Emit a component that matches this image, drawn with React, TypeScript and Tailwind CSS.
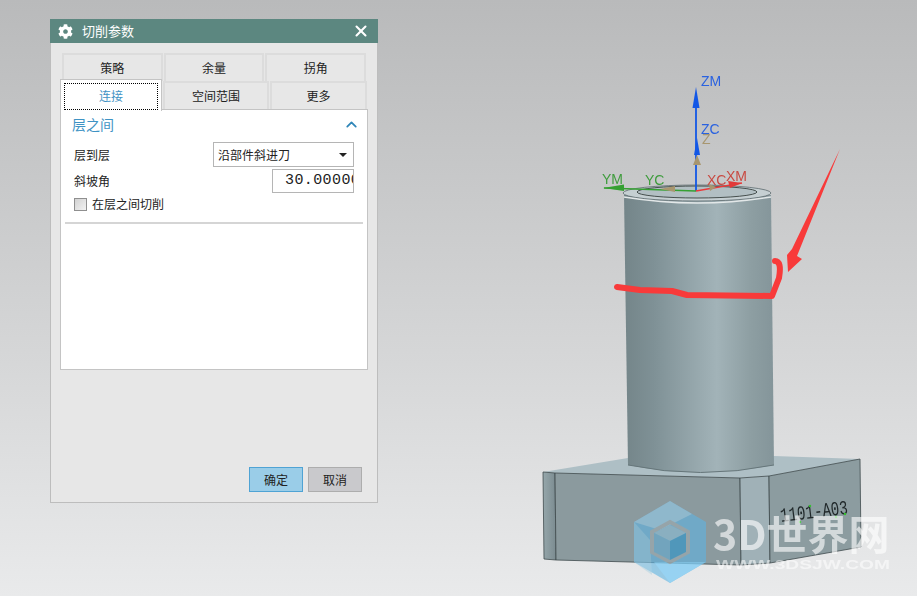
import { ChevronUp, X } from "lucide-react"
import { FaCog } from "react-icons/fa"

const cjk = "font-['Noto_Sans_CJK_SC','Liberation_Sans',sans-serif]"

function Scene() {
  return (
    <svg className="absolute left-0 top-0 blur-[0.4px]" width="917" height="596" viewBox="0 0 917 596">
      <defs>
        <linearGradient id="cyl" x1="0" x2="1" y1="0" y2="0">
          <stop offset="0" stopColor="#748589" />
          <stop offset="0.2" stopColor="#7f9196" />
          <stop offset="0.62" stopColor="#a2b3b8" />
          <stop offset="0.85" stopColor="#8d9ea2" />
          <stop offset="1" stopColor="#84959a" />
        </linearGradient>
        <linearGradient id="leftFace" x1="0" x2="1" y1="0" y2="0">
          <stop offset="0" stopColor="#96a7ab" />
          <stop offset="1" stopColor="#7b8b90" />
        </linearGradient>
      </defs>

      {/* block */}
      <g stroke="#3f4a4d" strokeWidth="0.8" strokeLinejoin="round">
        <polygon points="543,472 628,458 774,456 860,459 769,476 740,478 555,473" fill="#aebfc5" stroke="none" />
        <polygon points="543,472 555,473 556,560 544,559" fill="url(#leftFace)" />
        <polygon points="555,473 740,478 741,565 556,560" fill="#8b9a9e" />
        <polygon points="740,478 769,476 770,563 741,565" fill="#a0b1b7" />
        <polygon points="769,476 860,459 861,547 770,563" fill="#8c9ca0" />
      </g>
      <text x="781" y="522" fontSize="20" textLength="68" lengthAdjust="spacingAndGlyphs" fill="#20282a" transform="rotate(-7 781 522)" className="font-['Liberation_Mono',monospace]">1101-A03</text>
      <g fill="#35c02f">
        <circle cx="800" cy="522" r="1.2" />
        <circle cx="810" cy="506" r="1.2" />
        <circle cx="836" cy="517" r="1.2" />
        <circle cx="845" cy="514" r="1.2" />
      </g>

      {/* cylinder */}
      <path d="M624 195 L628 465 Q700 480 774 465 L771 195 Z" fill="url(#cyl)" />
      <path d="M628 465 Q700 480 774 465" fill="none" stroke="#66767a" strokeWidth="1" />
      <ellipse cx="697" cy="193" rx="74" ry="8" fill="#c5cfd2" stroke="#5d6a6d" strokeWidth="0.8" />
      <ellipse cx="697" cy="192" rx="60" ry="6" fill="#b2bfc3" stroke="#39423f" strokeWidth="0.9" />
      <path d="M624 197 Q697 209 771 197" fill="none" stroke="#e2e7e8" strokeWidth="1.4" />

      {/* axes */}
      <path d="M696 191 L696 105" stroke="#1257e6" strokeWidth="1.8" />
      <polygon points="696,87 692.5,108 699.5,108" fill="#1257e6" />
      <polygon points="697,138 694,155 700,155" fill="#1257e6" />
      <polygon points="697,155 693,165 701,165" fill="#a8966f" />
      <path d="M696 191 L604 188" stroke="#35a032" strokeWidth="1.6" />
      <polygon points="603,188 624,184.5 624,191" fill="#35a032" />
      <polygon points="660,189 675,186 675,192" fill="#a8966f" />
      <path d="M696 191 L742 183" stroke="#ea3a3a" strokeWidth="1.6" />
      <polygon points="742,183 728,181 730,188" fill="#e23a3a" />
      <polygon points="716,187 709,184 710,191" fill="#a8966f" />
      <g fontSize="14" className="font-['Liberation_Sans',sans-serif]">
        <text x="701" y="86" fill="#2a62e0">ZM</text>
        <text x="701" y="134" fill="#2a62e0">ZC</text>
        <text x="702" y="144" fill="#a8966f">Z</text>
        <text x="602" y="184" fill="#3f9c3d">YM</text>
        <text x="645" y="185" fill="#3f9c3d">YC</text>
        <text x="707" y="185" fill="#c84a42">XC</text>
        <text x="726" y="181" fill="#c84a42">XM</text>
      </g>

      {/* red markup */}
      <path d="M617 287 L640 290 L672 291 L687 295 L772 296 L779 278 Q782 261 775 261" fill="none" stroke="#f83a3a" strokeWidth="6" strokeLinecap="round" strokeLinejoin="round" />
      <polygon points="840,149 797,256 802,259 788,272 787,255 792,249" fill="#f83a3a" />

      {/* watermark */}
      <g opacity="0.75">
        <polygon points="670,501 706,522 706,562 670,583 634,562 634,522" fill="#5fb4e2" opacity="0.8" />
        <polygon points="670,501 692,514 660,530 634,522" fill="#c4d9e4" opacity="0.45" />
        <polygon points="634,522 650,540 652,575 634,562" fill="#9ccbe2" opacity="0.5" />
        <polygon points="654,562 706,562 670,583" fill="#7ccbf4" />
        <polygon points="670,522 688,532 688,552 670,562 652,552 652,532" fill="none" stroke="#9aa8ad" strokeWidth="4" />
        <polygon points="670,525 686,533 670,541 654,533" fill="#8ab6cc" />
        <polygon points="654,533 670,541 670,560 654,552" fill="#6aa8c8" />
        <polygon points="686,533 670,541 670,560 686,552" fill="#3d97c4" />
      </g>
      <text x="713" y="550" fontSize="41" fontWeight="700" fill="#ffffff" fillOpacity="0.62" className="font-['Noto_Sans_CJK_SC','Liberation_Sans',sans-serif]">3D世界网</text>
      <text x="716" y="569" fontSize="12" fontWeight="700" textLength="174" lengthAdjust="spacingAndGlyphs" fill="#ffffff" fillOpacity="0.55" className="font-['Liberation_Sans',sans-serif]">WWW.3DSJW.COM</text>
    </svg>
  )
}

export default function App() {
  return (
    <div className={`relative h-[596px] w-[917px] overflow-hidden bg-linear-to-b from-[#b9babb] to-[#e9eaeb] text-xs text-[#222] ${cjk}`}>
      <Scene />

      <div className="absolute left-[50px] top-[19px] flex h-[484px] w-[328px] flex-col border border-t-0 border-[#bdbdbd] bg-[#e7e7e7]">
        <div className="-mx-px flex h-6 items-center bg-[#5c8780] pl-2 pr-2 text-white">
          <FaCog size={15} />
          <span className="ml-[9px] flex-1 text-[13px]">切削参数</span>
          <X size={18} strokeWidth={2.75} />
        </div>

        <div className="flex flex-1 flex-col px-[9px] pt-[10px]">
          <div className="mx-[2px] grid h-7 grid-cols-3 gap-px text-center">
            {["策略", "余量", "拐角"].map((t) => (
              <div key={t} className="flex items-center justify-center border-2 border-b-0 border-[#dcdcdc] pb-px">{t}</div>
            ))}
          </div>
          <div className="flex h-7 text-center">
            <div className="relative z-10 -mt-[2px] h-[32px] w-[102px] border border-b-0 border-[#c4c4c4] bg-white p-[3px]">
              <div className="flex h-[27px] items-center justify-center border border-dotted border-black pb-px text-[#3f93c4]">连接</div>
            </div>
            <div className="ml-px flex w-[106px] items-center justify-center border-2 border-b-0 border-[#dcdcdc] pb-px">空间范围</div>
            <div className="ml-px flex w-[97px] items-center justify-center border-2 border-b-0 border-[#dcdcdc] pb-px">更多</div>
          </div>

          <div className="flex h-[261px] flex-col border border-[#c4c4c4] bg-white px-1">
            <div className="mt-1 flex h-5 items-center justify-between pl-[7px] pr-[3px] text-sm text-[#3f93c4]">
              <span>层之间</span>
              <ChevronUp size={17} strokeWidth={2.5} className="text-[#2f86b8]" />
            </div>
            <div className="mt-2 flex h-[25px] items-center justify-between pl-[9px] pr-[9px]">
              <span>层到层</span>
              <div className="flex h-[25px] w-[141px] items-center justify-between border border-[#b5b5b5] pl-1 pr-[6px]">
                <span>沿部件斜进刀</span>
                <svg width="8" height="4" viewBox="0 0 8 4"><polygon points="0,0 8,0 4,4" fill="#222" /></svg>
              </div>
            </div>
            <div className="mt-[2px] flex h-6 items-center justify-between pl-[9px] pr-[9px]">
              <span>斜坡角</span>
              <div className="h-6 w-[82px] overflow-hidden whitespace-nowrap border border-[#b5b5b5] pl-3 font-['Liberation_Mono',monospace] text-[15px] leading-[22px] tracking-[0.4px]">30.00000</div>
            </div>
            <label className="mt-1 flex h-[14px] items-center gap-[5px] pl-[9px]">
              <span className="h-[13px] w-[13px] border border-[#8f8f8f] bg-linear-to-br from-[#d2d2d2] to-[#f2f2f2]" />
              <span>在层之间切削</span>
            </label>
            <div className="mt-[11px] h-[2px] bg-[#d5d5d5]" />
          </div>

          <div className="mt-auto mb-[10px] flex justify-end gap-[5px] pr-[6px]">
            <button className="h-[25px] w-[54px] border border-[#4fa3d4] bg-[#9acde8]">确定</button>
            <button className="h-[25px] w-[54px] border border-[#adadad] bg-[#c9c9cc]">取消</button>
          </div>
        </div>
      </div>
    </div>
  )
}
